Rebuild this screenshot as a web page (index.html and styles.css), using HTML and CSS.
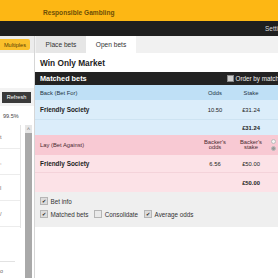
FILE: index.html
```html
<!DOCTYPE html>
<html>
<head>
<meta charset="utf-8">
<link rel="stylesheet" href="styles.css">
</head>
<body>
<div class="page">
  <div class="topbar"><span class="rg">Responsible Gambling</span></div>
  <div class="navbar"><span class="settings">Settings</span></div>
  <div class="content">
    <aside class="left">
      <div class="left-tabs"><span class="multiples">Multiples</span></div>
      <div class="left-blank"></div>
      <div class="refresh-row"><span class="refresh">Refresh</span></div>
      <div class="pct">99.5%</div>
      <div class="left-list">
        <div class="list-col">
          <div class="rows">
            <div class="lrow">t</div>
            <div class="lrow">,</div>
            <div class="lrow">l</div>
            <div class="lrow">/</div>
          </div>
          <div class="foot">o</div>
        </div>
        <div class="scrollbar"><span class="arrow">&#708;</span></div>
      </div>
    </aside>
    <main class="main">
      <div class="tabs">
        <span class="tab">Place bets</span>
        <span class="tab active">Open bets</span>
      </div>
      <div class="market">
        <span class="title">Win Only Market</span>
        <span class="mbtn"></span>
      </div>
      <div class="matched-head">
        <span class="mh-title">Matched bets</span>
        <span class="order"><span class="cb-dark"></span>Order by matched date</span>
      </div>
      <div class="section back">
        <div class="grid shead">
          <span class="stitle">Back (Bet For)</span>
          <span class="col">Odds</span>
          <span class="col">Stake</span>
          <span></span>
        </div>
        <div class="grid srow">
          <span class="name">Friendly Society</span>
          <span class="col">10.50</span>
          <span class="col">£31.24</span>
          <span></span>
        </div>
        <div class="grid stotal">
          <span></span>
          <span></span>
          <span class="col total">£31.24</span>
          <span></span>
        </div>
      </div>
      <div class="section lay">
        <div class="grid shead">
          <span class="stitle">Lay (Bet Against)</span>
          <span class="col two">Backer's<br>odds</span>
          <span class="col two">Backer's<br>stake</span>
          <span class="dots"><i class="dot"></i><i class="dot full"></i></span>
        </div>
        <div class="grid srow">
          <span class="name">Friendly Society</span>
          <span class="col">6.56</span>
          <span class="col">£50.00</span>
          <span></span>
        </div>
        <div class="grid stotal">
          <span></span>
          <span></span>
          <span class="col total">£50.00</span>
          <span></span>
        </div>
      </div>
      <div class="options">
        <div class="opt-row">
          <span class="opt"><span class="cb on">&#10004;</span>Bet info</span>
        </div>
        <div class="opt-row">
          <span class="opt"><span class="cb on">&#10004;</span>Matched bets</span>
          <span class="opt"><span class="cb"></span>Consolidate</span>
          <span class="opt"><span class="cb on">&#10004;</span>Average odds</span>
        </div>
      </div>
    </main>
  </div>
</div>
</body>
</html>
```

FILE: styles.css
```css
html, body {
  margin: 0;
  padding: 0;
  background: #ffffff;
}
body {
  width: 278px;
  height: 278px;
  overflow: hidden;
  font-family: "Liberation Sans", Arial, sans-serif;
  color: #222;
}
.page {
  width: 300px;
  display: flex;
  flex-direction: column;
}
.topbar {
  height: 21px;
  background: #fdb714;
  display: flex;
  align-items: center;
  padding-left: 43px;
}
.rg {
  font-size: 6.6px;
  font-weight: bold;
  color: #6e4f06;
  margin-top: 4px;
}
.navbar {
  height: 15px;
  background: #1f1f1f;
  display: flex;
  align-items: center;
  box-sizing: border-box;
  padding-left: 265px;
}
.settings {
  color: #ddd;
  font-size: 6.5px;
}
.content {
  display: flex;
  height: 242px;
}
.left {
  width: 34px;
  border-right: 1px solid #d6d6d6;
  display: flex;
  flex-direction: column;
  background: #fff;
}
.left-tabs {
  height: 17px;
  background: #ececec;
  display: flex;
  align-items: center;
}
.multiples {
  background: #fbc02b;
  color: #5a4000;
  font-size: 5.6px;
  height: 11px;
  width: 30px;
  display: flex;
  align-items: center;
  justify-content: flex-end;
  padding-right: 4px;
  box-sizing: border-box;
  border-radius: 0 2px 2px 0;
}
.left-blank {
  height: 35px;
}
.refresh-row {
  height: 18px;
  background: #f3f3f3;
  display: flex;
  align-items: center;
  padding-left: 2px;
}
.refresh {
  background: #3a3a3a;
  color: #fff;
  font-size: 5.6px;
  width: 29px;
  height: 11px;
  display: flex;
  align-items: center;
  justify-content: center;
}
.pct {
  height: 19px;
  font-size: 5.5px;
  color: #444;
  display: flex;
  align-items: center;
  padding-left: 3px;
  box-sizing: border-box;
}
.left-list {
  flex: 1;
  display: flex;
}
.list-col {
  width: 21px;
  display: flex;
  flex-direction: column;
}
.rows {
  width: 20px;
  border-right: 1px solid #e4e4e4;
  height: 103px;
  display: flex;
  flex-direction: column;
}
.lrow {
  height: 25px;
  border-bottom: 1px solid #ececec;
  font-size: 5.5px;
  color: #666;
  display: flex;
  align-items: center;
}
.rows .lrow:first-child {
  height: 23px;
}
.foot {
  margin-top: 33px;
  width: 15px;
  border-top: 1px solid #e2e2e2;
  font-size: 5.5px;
  color: #666;
  padding-top: 6px;
}
.scrollbar {
  margin-left: 4px;
  width: 7px;
  background: #a9a9a9;
  display: flex;
  justify-content: center;
}
.arrow {
  font-size: 6px;
  color: #777;
  background: #e6e6e6;
  width: 7px;
  height: 8px;
  text-align: center;
  line-height: 8px;
}
.main {
  width: 265px;
  display: flex;
  flex-direction: column;
  background: #fff;
}
.tabs {
  height: 17px;
  background: #f1f1f1;
  display: flex;
  padding-left: 1px;
}
.tab {
  width: 50px;
  font-size: 6.6px;
  color: #333;
  display: flex;
  align-items: center;
  justify-content: center;
  background: #e6e6e6;
}
.tab.active {
  background: #fff;
}
.market {
  height: 19px;
  display: flex;
  align-items: center;
  padding-left: 5px;
  justify-content: space-between;
}
.title {
  font-size: 8.3px;
  font-weight: bold;
  color: #222;
}
.mbtn {
  width: 10px;
  height: 9px;
  background: #222;
  border-radius: 1px;
  margin-top: 1px;
  margin-right: -3px;
}
.matched-head {
  height: 13px;
  background: #222;
  display: flex;
  align-items: center;
  padding-left: 5px;
  color: #fff;
}
.mh-title {
  font-size: 7.3px;
  font-weight: bold;
  width: 187px;
}
.order {
  font-size: 6.3px;
  display: flex;
  align-items: center;
  white-space: nowrap;
  color: #f0f0f0;
}
.cb-dark {
  width: 5px;
  height: 5px;
  background: #ccc;
  border: 0.5px solid #888;
  margin-right: 1.5px;
}
.grid {
  display: grid;
  grid-template-columns: 1fr 34px 38px 30px;
  align-items: center;
  padding-left: 5px;
}
.col {
  text-align: center;
  font-size: 5.8px;
}
.stitle {
  font-size: 5.8px;
}
.name {
  font-size: 6.4px;
  font-weight: bold;
}
.total {
  font-weight: bold;
}
.back .shead {
  height: 15px;
  background: #bfe0f6;
  color: #234;
}
.back .srow {
  height: 20px;
  background: #dbedfa;
  border-bottom: 1px solid #cde3f2;
  box-sizing: border-box;
}
.back .stotal {
  height: 15px;
  background: #dbedfa;
}
.lay .shead {
  height: 20px;
  background: #f8c9d3;
  color: #4a2a30;
}
.lay .srow {
  height: 18px;
  background: #fce2e7;
  border-bottom: 1px solid #f4d3da;
  box-sizing: border-box;
}
.lay .stotal {
  height: 19px;
  background: #fce2e7;
}
.col.two {
  line-height: 5.5px;
}
.dots {
  display: flex;
  flex-direction: column;
  gap: 2px;
  padding-left: 1px;
}
.dot {
  width: 3px;
  height: 3px;
  border-radius: 50%;
  border: 0.5px solid #bbb;
  background: #f4f4f4;
}
.dot.full {
  background: #999;
}
.options {
  height: 35px;
  background: #efefef;
  padding: 5px 0 0 5px;
  box-sizing: border-box;
  display: flex;
  flex-direction: column;
  gap: 5px;
}
.opt-row {
  display: flex;
  gap: 6px;
  height: 8px;
  align-items: center;
}
.opt {
  display: flex;
  align-items: center;
  font-size: 6.3px;
  color: #333;
}
.cb {
  width: 6px;
  height: 6px;
  border: 0.5px solid #b5b5b5;
  background: #e9e9e9;
  margin-right: 2.5px;
  font-size: 5px;
  line-height: 6px;
  text-align: center;
  color: #222;
}
.cb.on {
  background: #dcdcdc;
}
```
